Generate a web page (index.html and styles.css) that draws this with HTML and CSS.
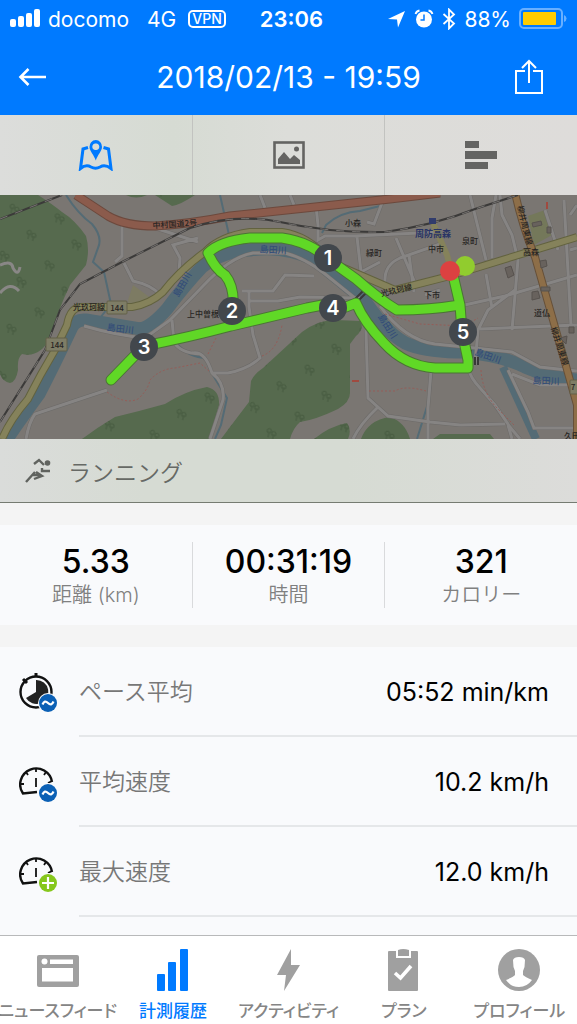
FILE: index.html
```
<!DOCTYPE html>
<html lang="ja">
<head>
  <meta charset="UTF-8">
  <meta name="viewport" content="width=device-width, initial-scale=1">
  <title>2018/02/13 - 19:59</title>
  <link rel="stylesheet" href="styles.css">
</head>
<body>
  <div class="app">
    <header class="header">
      <div class="status">
        <div class="status-left">
          <svg width="32" height="20" viewBox="0 0 32 20" fill="#fff">
            <rect x="0" y="10" width="6" height="8" rx="2"/>
            <rect x="8" y="7" width="6" height="11" rx="2"/>
            <rect x="16" y="4" width="6" height="14" rx="2"/>
            <rect x="24" y="0" width="6" height="18" rx="2"/>
          </svg>
          <span>docomo</span>
          <span class="network">4G</span>
          <span class="vpn">VPN</span>
        </div>
        <div class="clock">23:06</div>
        <div class="status-right">
          <svg width="18" height="18" viewBox="0 0 18 18" fill="#fff"><path d="M17 1L10 17.500L9 9.500L0 9Z"/></svg>
          <svg class="alarm" width="20" height="20" viewBox="0 0 20 20">
            <circle cx="10" cy="10.500" r="8" fill="#fff"/>
            <path d="M10 5.500V11H6.500" fill="none" stroke="#007aff" stroke-width="1.500"/>
            <path d="M1.500 5Q2.500 2 5.500 1.500M14.500 1.500Q17.500 2 18.500 5" fill="none" stroke="#fff" stroke-width="1.800"/>
          </svg>
          <svg width="14" height="22" viewBox="0 0 14 22" fill="none" stroke="#fff" stroke-width="1.800"><path d="M1.500 6L12 15.500L7 20.500V1.500L12 6.500L1.500 16"/></svg>
          <span>88%</span>
          <svg width="48" height="22" viewBox="0 0 48 22">
            <rect x="1" y="1" width="42" height="19" rx="4" fill="none" stroke="#68afff" stroke-width="2"/>
            <rect x="4" y="4" width="33" height="13" rx="1" fill="#ffcc00"/>
            <path d="M45 7Q47.500 8 47.500 10.500T45 14Z" fill="#68afff"/>
          </svg>
        </div>
      </div>
      <div class="navbar">
        <button class="icon-btn" type="button" aria-label="戻る">
          <svg width="30" height="20" viewBox="0 0 30 20" fill="none" stroke="#fff" stroke-width="2.600"><path d="M28 10H3M10.500 2L2.500 10L10.500 18"/></svg>
        </button>
        <h1>2018/02/13 - 19:59</h1>
        <button class="icon-btn share" type="button" aria-label="共有">
          <svg width="30" height="36" viewBox="0 0 30 36" fill="none" stroke="#fff" stroke-width="2"><path d="M11 12H2V34H28V12H19M15 24V2M8 9L15 2L22 9"/></svg>
        </button>
      </div>
    </header>

    <main>
      <div class="views">
        <button class="view active" type="button" aria-label="地図">
          <svg width="36" height="32" viewBox="0 0 36 32">
            <path d="M10 8.500L5 10L2.500 29.500Q8 25 13 28Q17.500 30.500 22 28Q27 25 33 29.500L30.500 10L25.500 8.500" fill="none" stroke="#007aff" stroke-width="3"/>
            <path fill-rule="evenodd" d="M17.800 1A6.500 6.500 0 0 0 11.500 8C11.500 12 16 16 17.800 21.500C19.500 16 24 12 24 8A6.500 6.500 0 0 0 17.800 1ZM17.800 4.500A3 3.300 0 1 1 17.800 11A3 3.300 0 1 1 17.800 4.500Z" fill="#007aff"/>
          </svg>
        </button>
        <button class="view" type="button" aria-label="写真">
          <svg width="32" height="28" viewBox="0 0 32 28">
            <rect x="1.500" y="1.500" width="29" height="25" fill="none" stroke="#646462" stroke-width="2.600"/>
            <path d="M5 23V18L11 11L17 18L21 14L27 19V23Z" fill="#646462"/>
            <circle cx="23.500" cy="8" r="2.500" fill="#646462"/>
          </svg>
        </button>
        <button class="view" type="button" aria-label="ラップ">
          <svg width="32" height="28" viewBox="0 0 32 28" fill="#646462"><path d="M0 0H14V7H0ZM0 10H32V18H0ZM0 21H23V28H0Z"/></svg>
        </button>
      </div>

      <svg class="map" viewBox="0 195 577 244" preserveAspectRatio="xMidYMid slice" lang="ja">
        <defs>
          <pattern id="trees" width="46" height="48" patternUnits="userSpaceOnUse" patternTransform="rotate(12)">
            <path d="M9 14V9M7 9Q6 5 9 5T11 9ZM14 15V10M12 11Q11 7 14 7T16 11ZM31 36V31M29 31Q28 27 31 27T33 31ZM36 37V32M34 33Q33 29 36 29T38 33Z" fill="none" stroke="#465a40" stroke-width="1"/>
          </pattern>
          <g id="woods">
            <path d="M0 195H38Q52 204 62 212Q75 220 86 236Q90 250 86 265L70 285Q58 310 50 338Q40 358 22 354Q17 358 18 370Q16 382 10 383Q3 382 0 374Z"/>
            <path d="M82 439Q98 427 115 417Q140 411 165 404Q185 391 207 387Q220 390 219 405L209 439Z"/>
            <path d="M221 439Q236 419 249 402L251 381Q254 374 263 368L302 332Q318 320 335 320L360 321Q365 328 356 336L350 344V393Q350 402 338 409Q315 420 300 422Q293 428 290 439Z"/>
            <path d="M314 439Q330 426 347 423Q352 430 348 439ZM361 439Q368 420 390 417Q405 422 410 439ZM433 439L440 434H490L494 439ZM155 195H195Q180 205 172 206ZM126 195H147Q136 200 126 195Z"/>
          </g>
          <g id="lanes">
            <path d="M122 226V256L115 262M124 263L133 281Q152 285 160 295M155 228L198 242M198 238L173 245L180 258L179 272M84 326Q115 335 145 338L170 320L203 286Q230 257 253 253H285Q305 258 325 274L356 299"/>
            <path d="M172 320L174 342Q180 353 200 354M192 353Q205 350 212 373Q225 383 223 400L210 439M213 373H228Q248 369 260 358L253 335L249 307V292M242 291H273L285 275L314 276M250 301H278L300 297L360 298M107 390L80 399L35 414Q29 422 26 439"/>
            <path d="M260 195L265 208M290 195L294 205M316 206L318 225V240L325 236H355L440 232M357 237L361 272L380 262M367 222L374 224L385 195M385 282Q384 265 400 258L440 244M396 238L415 283M409 255L414 292M425 295L440 290M470 195L486 260M496 195L492 218L492 258M500 195L502 215L512 235L518 260L512 330M545 210L558 250M564 200L571 325M577 205L570 215"/>
            <path d="M460 306L505 296L577 275M515 290L488 310L478 330L475 365M480 329L577 325M486 274L492 308M570 250L577 248M366 330L368 398L388 416L430 422L460 425L505 424M378 407Q360 424 353 439M431 371L428 408V439M469 370Q470 377 480 388L495 405L510 427L520 439M508 370L528 412L534 428H577M508 425L512 439M380 306Q405 340 435 344L475 348Q495 350 512 352L540 367L577 371M512 374L540 385H577"/>
          </g>
        </defs>

        <rect y="195" width="577" height="244" fill="#7a7672"/>
        <use href="#woods" fill="#566a4e"/>
        <use href="#woods" fill="url(#trees)"/>
        <path d="M133 285L128 300L129 307L140 303L148 304L152 299Z" fill="#7d7b63"/>
        <path d="M528 216L545 210L552 235L534 245Z" fill="#74785a"/>

        <!-- water -->
        <g fill="none" stroke="#546b75" stroke-width="2">
          <path d="M66 195Q78 214 92 224Q103 237 98 248L93 262L104 272L111 304L100 318"/>
          <path d="M220 195L229 235M322 233L326 225Q340 212 360 211L380 206M320 245L317 256M178 345Q188 357 207 358M190 353Q208 355 210 370Q220 387 227 398L221 425L215 439M432 370L429 400L417 439"/>
        </g>
        <path d="M7 439Q20 420 39 394Q55 363 72 327Q76 319 86 320L140 329Q151 327 167 309Q184 286 202 267Q225 250 250 250Q285 245 315 260Q338 279 365 301Q390 338 410 345Q430 352 465 352Q500 355 525 367Q550 378 577 380" fill="none" stroke="#546b75" stroke-width="13"/>
        <path d="M503 367L536 439" stroke="#546b75" stroke-width="8"/>

        <!-- streets -->
        <use href="#lanes" fill="none" stroke="#6c6a68" stroke-width="4"/>
        <use href="#lanes" fill="none" stroke="#868483" stroke-width="3"/>
        <path d="M0 265Q12 260 13 268Q18 277 20 267M0 293Q10 281 19 291" fill="none" stroke="#898786" stroke-width="3"/>

        <!-- main roads -->
        <path d="M2 439Q10 420 28 399Q40 375 55 350L67 325Q70 307 82 307H132Q150 304 163 292Q180 270 205 252Q220 236 250 232H282Q310 236 330 262L395 290L450 276L577 237" fill="none" stroke="#62623f" stroke-width="8"/>
        <path d="M2 439Q10 420 28 399Q40 375 55 350L67 325Q70 307 82 307H132Q150 304 163 292Q180 270 205 252Q220 236 250 232H282Q310 236 330 262L395 290L450 276L577 237M433 223L447 255L452 274" fill="none" stroke="#85825b" stroke-width="6"/>
        <path d="M76 195L108 216Q125 226 155 226Q190 224 230 216L390 199L440 193" fill="none" stroke="#6c493d" stroke-width="9"/>
        <path d="M76 195L108 216Q125 226 155 226Q190 224 230 216L390 199L440 193" fill="none" stroke="#8b5b4c" stroke-width="7"/>
        <path d="M515 193Q522 225 535 257L553 320L577 405V439" fill="none" stroke="#665039" stroke-width="8"/>
        <path d="M515 193Q522 225 535 257L553 320L577 405V439" fill="none" stroke="#8d6e48" stroke-width="6"/>

        <!-- railways -->
        <g fill="none">
          <path d="M0 219L62 195M0 422L45 350L60 310L80 284L122 262L190 228Q235 213 280 222Q330 233 385 232Q435 225 475 209L518 195" stroke="#3b3a39" stroke-width="2"/>
          <path d="M0 219L62 195M0 422L45 350L60 310L80 284L122 262L190 228Q235 213 280 222Q330 233 385 232Q435 225 475 209L518 195" stroke="#777472" stroke-width="1" stroke-dasharray="8 8"/>
        </g>
        <path d="M353 301L363 291M356 303L366 293M471 350V364M475 357V365M478 357V365" stroke="#393838" stroke-width="2"/>
        <g fill="#68625d" stroke="#57524e">
          <path d="M505 268L511 266L514 275L508 278ZM532 292L538 291L540 298L532 300ZM540 261L546 260L547 266L541 268ZM532 223L541 221L542 225L533 227ZM547 227H551V233H547ZM569 327H574V333H569ZM541 287H550V291H541ZM560 338L567 336L566 344Z"/>
        </g>
        <path d="M107 392Q125 405 138 399Q148 390 150 380Q160 369 175 368L200 363L210 372M208 354L216 338M262 356Q278 350 282 325M369 391H395Q405 385 426 391M385 314L420 324L465 326L478 318M481 370Q482 390 495 406L514 425" fill="none" stroke="#955d58" stroke-width="1" stroke-dasharray="2 2"/>
        <path d="M352 381H359M547 202V209" stroke="#a04a40" stroke-width="2"/>
        <rect x="429" y="218" width="7" height="6" fill="#313c6c"/>

        <!-- route -->
        <path class="route-edge" d="M111 380L144 346Q190 337 231 326L307 308L333 303L346 307L356 303Q364 322 384 343Q405 366 435 368L468 368V360L462 332L460 305L453 275M460 305Q430 310 397 310Q380 300 356 279L328 259Q310 242 282 238H250Q220 241 208 253Q215 269 225 275Q235 287 233 310"/>
        <path class="route" d="M111 380L144 346Q190 337 231 326L307 308L333 303L346 307L356 303Q364 322 384 343Q405 366 435 368L468 368V360L462 332L460 305L453 275M460 305Q430 310 397 310Q380 300 356 279L328 259Q310 242 282 238H250Q220 241 208 253Q215 269 225 275Q235 287 233 310"/>

        <g class="road-sign">
          <rect x="107" y="301" width="20" height="13" rx="1"/>
          <rect x="46" y="338" width="21" height="13" rx="1"/>
          <rect x="570" y="380" width="14" height="14" rx="1"/>
        </g>
        <g class="place">
          <text x="175" y="227" transform="rotate(-4 175 227)">中村国道2号</text>
          <text x="89" y="310">光玖珂線</text>
          <text x="117" y="311">144</text>
          <text x="57" y="348">144</text>
          <text x="203" y="317">上中曽根</text>
          <text x="353" y="226">小森</text>
          <text x="374" y="256">緑町</text>
          <text x="470" y="244">泉町</text>
          <text x="436" y="252">中市</text>
          <text x="432" y="298">下市</text>
          <text x="531" y="255">高森</text>
          <text x="542" y="316">道仏</text>
          <text x="397" y="293" transform="rotate(-13 397 293)">光玖珂線</text>
          <text x="522" y="226" transform="rotate(76 522 226)">柳井周東線</text>
          <text x="557" y="347" transform="rotate(72 557 347)">柳井周東線</text>
          <text x="573" y="390">7</text>
          <text x="572" y="439">久田</text>
        </g>
        <g class="river">
          <text x="120" y="332" transform="rotate(7 120 332)">島田川</text>
          <text x="185" y="286" transform="rotate(-60 185 286)">島田川</text>
          <text x="273" y="253" transform="rotate(3 273 253)">島田川</text>
          <text x="385" y="328" transform="rotate(58 385 328)">島田川</text>
          <text x="487" y="359" transform="rotate(20 487 359)">島田川</text>
          <text x="546" y="384" transform="rotate(2 546 384)">島田川</text>
          <text x="433" y="237" class="station">周防高森</text>
        </g>

        <circle cx="465" cy="266" r="10" fill="#91cc2e"/>
        <circle cx="450" cy="271" r="10" fill="#dc4141"/>
        <g class="marker">
          <circle cx="328" cy="258" r="14"/><text x="328" y="265">1</text>
          <circle cx="232" cy="311" r="14"/><text x="232" y="318">2</text>
          <circle cx="144" cy="347" r="14"/><text x="144" y="354">3</text>
          <circle cx="333" cy="308" r="14"/><text x="333" y="315">4</text>
          <circle cx="463" cy="332" r="14"/><text x="463" y="339">5</text>
        </g>
      </svg>

      <div class="activity">
        <svg width="28" height="26" viewBox="0 0 28 26" fill="none" stroke="#60635f" stroke-width="2.400">
          <path d="M9 6L14 2L19 7M25 13H17V10M1 24L10 14M8 17H16M11 14L17 18L9 21"/>
          <circle cx="22.500" cy="5" r="2.800" fill="#60635f" stroke="none"/>
        </svg>
        <span>ランニング</span>
      </div>

      <dl class="stats">
        <div class="stat"><dt>距離 (km)</dt><dd>5.33</dd></div>
        <div class="stat"><dt>時間</dt><dd>00:31:19</dd></div>
        <div class="stat"><dt>カロリー</dt><dd>321</dd></div>
      </dl>

      <dl class="details">
        <div class="row">
          <svg class="row-icon" width="40" height="40" viewBox="0 0 40 40">
            <circle cx="17" cy="20" r="15.500" fill="none" stroke="#111" stroke-width="2.400"/>
            <path d="M17 1V5M4 7L8 11" stroke="#111" stroke-width="3"/>
            <path d="M17 20V8A12 12 0 1 1 7 26Z" fill="#222"/>
            <circle cx="29" cy="31" r="10" fill="#f9fafc"/><circle cx="29" cy="31" r="9" fill="#0b60b5"/>
            <path d="M23.500 32.500Q25.500 27.500 29 31T34.500 29.500" fill="none" stroke="#fff" stroke-width="2.200"/>
          </svg>
          <dt>ペース平均</dt><dd>05:52 min/km</dd>
        </div>
        <div class="row">
          <svg class="row-icon" width="40" height="40" viewBox="0 0 40 40">
            <use href="#gauge"/>
            <circle cx="29" cy="31" r="10" fill="#f9fafc"/><circle cx="29" cy="31" r="9" fill="#0b60b5"/>
            <path d="M23.500 32.500Q25.500 27.500 29 31T34.500 29.500" fill="none" stroke="#fff" stroke-width="2.200"/>
          </svg>
          <dt>平均速度</dt><dd>10.2 km/h</dd>
        </div>
        <div class="row">
          <svg class="row-icon" width="40" height="40" viewBox="0 0 40 40">
            <g id="gauge" fill="none" stroke="#111">
              <path d="M33 20A16 16 0 1 0 4 31.500L18 30" stroke-width="2.400"/>
              <path d="M17 6V10M7 10L9 13M27 10L25 13M1 22H5M29 21L33 19" stroke-width="1.800"/>
              <path d="M17 16V25" stroke-width="1.800"/>
            </g>
            <circle cx="29" cy="31" r="10" fill="#f9fafc"/><circle cx="29" cy="31" r="9" fill="#86c71c"/>
            <path d="M23 31H35M29 25V37" stroke="#fff" stroke-width="2.200"/>
          </svg>
          <dt>最大速度</dt><dd>12.0 km/h</dd>
        </div>
      </dl>
    </main>

    <nav class="tabbar">
      <a href="#feed">
        <svg width="42" height="42" viewBox="0 0 42 42">
          <rect x="0" y="6" width="42" height="32" rx="2" fill="#a0a0a0"/>
          <circle cx="7.500" cy="12.500" r="3" fill="#fff"/>
          <path d="M13 10.500H36V15H13ZM5 19H36V32.500H5Z" fill="#fff"/>
        </svg>
        <span>ニュースフィード</span>
      </a>
      <a class="active" href="#history">
        <svg width="42" height="42" viewBox="0 0 42 42" fill="#007aff">
          <rect x="5" y="25" width="8" height="17" rx="1"/><rect x="16" y="13" width="8" height="29" rx="1"/><rect x="28" y="0" width="8" height="42" rx="1"/>
        </svg>
        <span>計測履歴</span>
      </a>
      <a href="#activity">
        <svg width="42" height="42" viewBox="0 0 42 42" fill="#a0a0a0"><path d="M23 0L9 26H18L16 42L32 16H23Z"/></svg>
        <span>アクティビティ</span>
      </a>
      <a href="#plan">
        <svg width="42" height="42" viewBox="0 0 42 42">
          <rect x="5" y="2" width="30" height="40" rx="1" fill="#a0a0a0"/>
          <path d="M13 1H28V9H13Z" fill="#fff"/>
          <path d="M15 1Q20 -1 26 1V7H15Z" fill="#a0a0a0"/>
          <path d="M12 24L17.500 29L28 17" fill="none" stroke="#fff" stroke-width="3.600"/>
        </svg>
        <span>プラン</span>
      </a>
      <a href="#profile">
        <svg width="42" height="42" viewBox="0 0 42 42">
          <circle cx="21" cy="21" r="21" fill="#a0a0a0"/>
          <path d="M15 11Q16 8 21 8T27 11L26.500 18L25 22V26Q27 28 34 31Q29 38 21 38T8 31Q15 28 17 26V22L15.500 18Z" fill="#fff"/>
        </svg>
        <span>プロフィール</span>
      </a>
    </nav>
  </div>
</body>
</html>
```
FILE: styles.css
```
* {
  box-sizing: border-box;
}
body {
  margin: 0;
  font-family: Inter, 'Noto Sans CJK JP', sans-serif;
  background: #f4f4f4;
  color: #000;
}
button {
  border: none;
  background: none;
  padding: 0;
  font: inherit;
  cursor: pointer;
}
svg {
  display: block;
  flex-shrink: 0;
}
dl, dd, h1 {
  margin: 0;
}
.app {
  display: flex;
  flex-direction: column;
  height: 100vh;
}
main {
  flex: 1;
  overflow: hidden;
}

/* header */
.header {
  background: #007aff;
  color: #fff;
}
.status {
  display: grid;
  grid-template-columns: 1fr auto 1fr;
  align-items: center;
  height: 38px;
  padding: 0 10px;
  font-size: 21px;
}
.status-left, .status-right {
  display: flex;
  align-items: center;
  gap: 6px;
}
.status-right {
  justify-content: flex-end;
  gap: 8px;
}
.network {
  margin-left: 12px;
}
.vpn {
  border: 2px solid #fff;
  border-radius: 5px;
  padding: 0 2px;
  margin-left: 6px;
  font-size: 14px;
  line-height: 14px;
  font-weight: 500;
}
.clock {
  padding-left: 6px;
  font-size: 22px;
  font-weight: 600;
}
.navbar {
  display: grid;
  grid-template-columns: 1fr auto 1fr;
  align-items: center;
  height: 77px;
  padding: 0 18px;
}
.navbar h1 {
  font-size: 30px;
  font-weight: 400;
}
.share {
  justify-self: end;
  margin-right: 15px;
}

/* view switch */
.views {
  display: flex;
  height: 80px;
  background: linear-gradient(90deg, #dcdddb, #d6dbd3 30%, #dcddd9 50%, #dedcda);
}
.view {
  flex: 1;
  display: flex;
  align-items: center;
  justify-content: center;
}
.view + .view {
  border-left: 1px solid #c2c3c0;
}

/* map */
.map {
  width: 100%;
  height: 244px;
}
.route, .route-edge {
  fill: none;
  stroke: #60d826;
  stroke-width: 9;
  stroke-linecap: round;
  stroke-linejoin: round;
}
.route-edge {
  stroke: #4b7435;
  stroke-width: 11;
}
.place, .river {
  font-family: 'Noto Sans CJK JP', sans-serif;
  font-size: 8px;
  font-weight: 500;
  text-anchor: middle;
  fill: #272523;
}
.river {
  font-size: 9px;
  fill: #344e78;
}
.station {
  font-weight: bold;
  fill: #293465;
}
.road-sign {
  fill: #7e7d66;
  stroke: #636148;
}
.marker {
  fill: #42474c;
  font-size: 20px;
  font-weight: 600;
  text-anchor: middle;
}
.marker text {
  fill: #fff;
}
.activity {
  display: flex;
  align-items: center;
  gap: 15px;
  height: 64px;
  padding: 0 25px;
  border-bottom: 1px solid #757b71;
  background: linear-gradient(90deg, #dadcda, #d6dbd3 25%, #d6dbd3 60%, #dcdcda);
  color: #666965;
  font-size: 23px;
  font-weight: 350;
}

/* totals */
.stats {
  display: flex;
  margin: 22px 0;
  padding: 17px 0;
  background: #f9fafc;
}
.stat {
  flex: 1;
  display: flex;
  flex-direction: column-reverse;
  text-align: center;
}
.stat + .stat {
  border-left: 1px solid #d9dadc;
}
.stat dt {
  color: #808080;
  font-size: 20px;
  font-weight: 350;
  line-height: 26px;
}
.stat dd {
  font-size: 32px;
  font-weight: 500;
  line-height: 40px;
}

/* details */
.details {
  background: #f9fafc;
  height: 100%;
}
.row {
  display: flex;
  align-items: center;
  height: 90px;
  padding-left: 19px;
}
.row-icon {
  margin-right: 20px;
}
.row dt, .row dd {
  height: 90px;
  border-bottom: 2px solid #e5e7e9;
  line-height: 90px;
}
.row dt {
  flex: 1;
  color: #777;
  font-size: 23px;
  font-weight: 350;
}
.row dd {
  padding-right: 28px;
  font-size: 25px;
}

/* bottom tabs */
.tabbar {
  display: flex;
  height: 89px;
  padding-top: 13px;
  border-top: 1px solid #b8b9ba;
  background: #fff;
}
.tabbar a {
  flex: 1 1 0;
  min-width: 0;
  display: flex;
  flex-direction: column;
  align-items: center;
  gap: 8px;
  color: #858585;
  font-size: 17px;
  font-weight: 500;
  line-height: 24px;
  white-space: nowrap;
  text-decoration: none;
  font-feature-settings: "palt";
}
.tabbar .active {
  color: #007aff;
}
```
